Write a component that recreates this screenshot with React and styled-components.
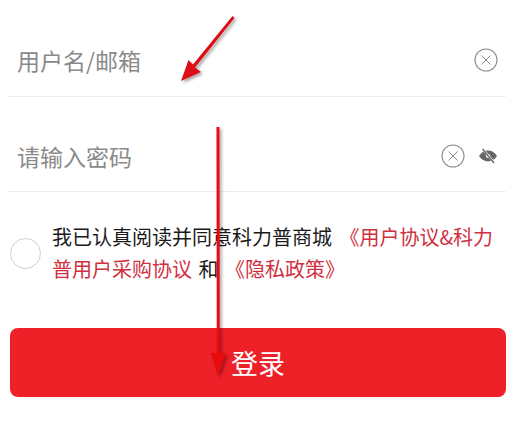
import React from "react";
import styled, { createGlobalStyle } from "styled-components";

const GlobalStyle = createGlobalStyle`
  html, body {
    margin: 0;
    padding: 0;
    background: #fff;
  }
`;

const Page = styled.div`
  position: relative;
  width: 519px;
  height: 430px;
  overflow: hidden;
  background: #fff;
  font-family: "Noto Sans CJK SC", "Noto Sans", sans-serif;
`;

const Form = styled.div`
  display: flex;
  flex-direction: column;
  padding: 0 13px 0 8px;
`;

const Field = styled.div`
  display: flex;
  align-items: center;
  height: ${(p) => p.$height}px;
  padding: 24px 8px 0 9px;
  box-sizing: border-box;
  border-bottom: 1px solid #eeeeee;
`;

const Placeholder = styled.span`
  flex: 1;
  font-size: 23px;
  color: #8a8a8a;
  line-height: 30px;
`;

const Icons = styled.div`
  display: flex;
  align-items: center;
  gap: 13px;
`;

const Agreement = styled.div`
  display: flex;
  align-items: center;
  padding: 29px 0 0 2px;
`;

const Radio = styled.div`
  flex: none;
  width: 29px;
  height: 29px;
  border: 1px solid #cfcfcf;
  border-radius: 50%;
  margin-right: 11px;
`;

const AgreementText = styled.p`
  margin: 0;
  font-size: 20px;
  line-height: 32px;
  color: #1a1a1a;
  width: 450px;
`;

const Link = styled.span`
  color: #d0303f;
  margin-left: ${(p) => p.$before || 0}px;
  margin-right: ${(p) => p.$after || 0}px;
`;

const Submit = styled.button`
  display: block;
  margin: 43px 0 0 2px;
  width: 496px;
  height: 69px;
  border: none;
  border-radius: 8px;
  background: #ee2028;
  color: #fff;
  font-family: inherit;
  font-size: 27px;
  padding: 0;
`;

const Marks = styled.svg`
  position: absolute;
  left: 0;
  top: 0;
  pointer-events: none;
`;

const ClearIcon = () => (
  <svg width="24" height="24" viewBox="0 0 24 24" fill="none" stroke="#8c8c8c">
    <circle cx="12" cy="12" r="11" strokeWidth="1.1" />
    <path d="M7.5 7.5l9 9M16.5 7.5l-9 9" strokeWidth="1" />
  </svg>
);

const HiddenEyeIcon = () => (
  <svg width="20" height="16" viewBox="0 0 20 16">
    <path
      d="M1 8C3.5 4.2 6.5 2.6 10 2.6s6.500 1.600 9 5.400c-2.500 3.800-5.500 5.400-9 5.400S3.500 11.800 1 8z"
      fill="#666666"
    />
    <circle cx="10" cy="8" r="2" fill="#fff" />
    <path d="M5 1.500l11 13" stroke="#fff" strokeWidth="2.400" />
    <path d="M4.500 1l11.500 14" stroke="#666666" strokeWidth="1.400" />
  </svg>
);

export default function App() {
  return (
    <Page>
      <GlobalStyle />
      <Form>
        <Field $height={97}>
          <Placeholder>用户名/邮箱</Placeholder>
          <ClearIcon />
        </Field>
        <Field $height={95}>
          <Placeholder>请输入密码</Placeholder>
          <Icons>
            <ClearIcon />
            <HiddenEyeIcon />
          </Icons>
        </Field>
        <Agreement>
          <Radio />
          <AgreementText>
            我已认真阅读并同意科力普商城 <Link $before={3} $after={2}>《用户协议&科力普用户采购协议</Link> 和 <Link $before={2}>《隐私政策》</Link>
          </AgreementText>
        </Agreement>
        <Submit>登录</Submit>
      </Form>
      <Marks width="519" height="430" viewBox="0 0 519 430">
        <defs>
          <filter id="shade" x="-30%" y="-10%" width="160%" height="120%">
            <feDropShadow dx="2" dy="2" stdDeviation="1.500" floodColor="#000" floodOpacity="0.35" />
          </filter>
        </defs>
        <g filter="url(#shade)" fill="#dc0f18">
          <path d="M232.500 16L234.500 18L195 67.500L201 72L181 81L188.500 60L193 64.500Z" />
          <path d="M216.500 127H219.500L219.800 353L226 353L218 376L211 353L216.800 353Z" fill="#e8080f" />
        </g>
      </Marks>
    </Page>
  );
}
